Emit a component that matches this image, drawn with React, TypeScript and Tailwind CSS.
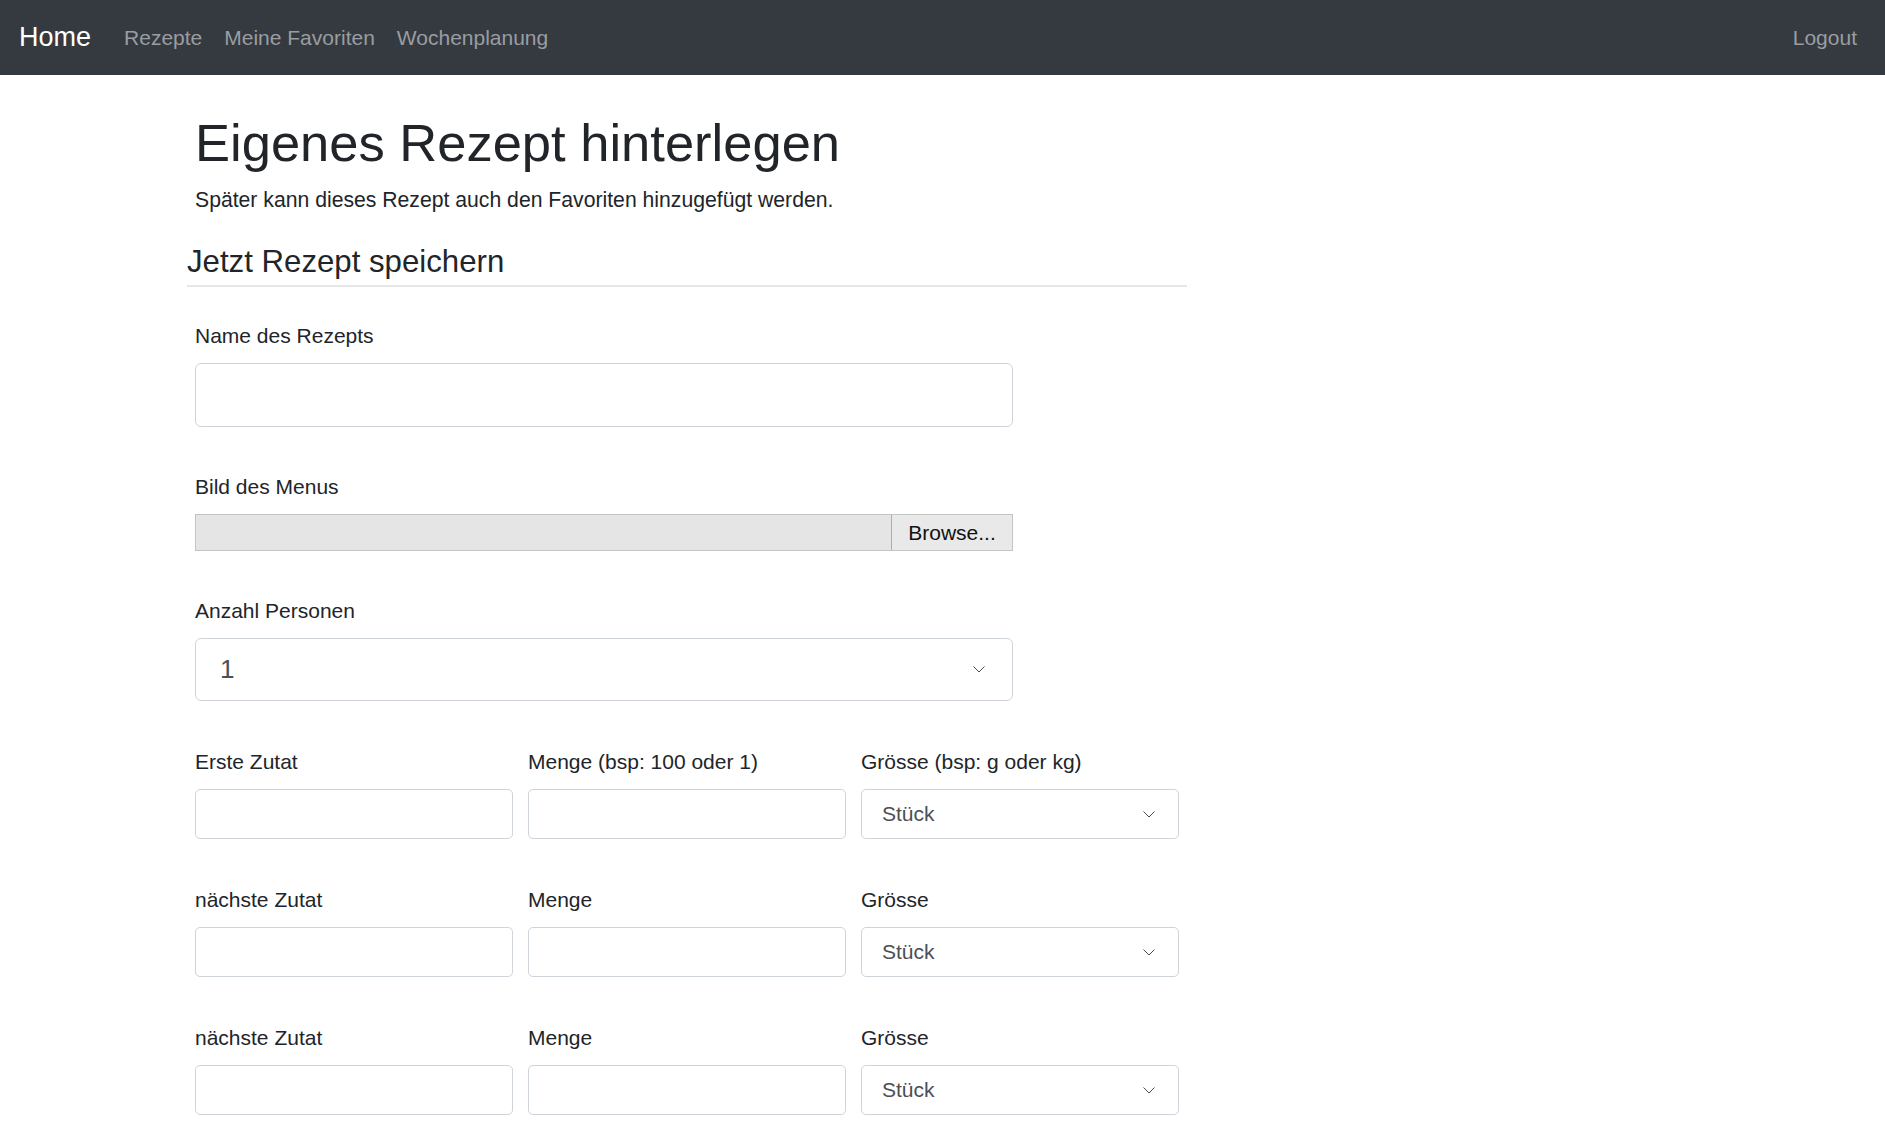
import React from 'react';

const font = { fontFamily: '"Liberation Sans", Arial, sans-serif' };

const Chevron: React.FC = () => (
  <svg width="12" height="7" viewBox="0 0 12 7" fill="none" className="shrink-0">
    <path d="M0.5 0.5 L6 6 L11.5 0.5" stroke="#4a4a4a" strokeWidth="1" />
  </svg>
);

const Label: React.FC<{ children: React.ReactNode }> = ({ children }) => (
  <label className="block h-[32px] leading-[32px] text-[21px] text-[#212529] mb-[11px]">{children}</label>
);

const TextInput: React.FC<{ tall?: boolean }> = ({ tall }) => (
  <input
    type="text"
    className={
      tall
        ? 'block w-full h-[64px] rounded-[6px] border border-[#ced4da] bg-white px-4 outline-none'
        : 'block w-full h-[50px] rounded-[5px] border border-[#ced4da] bg-white px-4 outline-none'
    }
  />
);

const FakeSelect: React.FC<{ value: string; tall?: boolean }> = ({ value, tall }) => (
  <div
    className={
      tall
        ? 'flex items-center justify-between w-full h-[63px] rounded-[6px] border border-[#ced4da] bg-white pl-[24px] pr-[27px] text-[26px] text-[#495057]'
        : 'flex items-center justify-between w-full h-[50px] rounded-[5px] border border-[#ced4da] bg-white pl-[20px] pr-[23px] text-[21px] text-[#495057]'
    }
  >
    <span>{value}</span>
    <Chevron />
  </div>
);

const IngredientRow: React.FC<{ first?: boolean }> = ({ first }) => (
  <div className="grid grid-cols-[318px_318px_318px] gap-[15px] mt-[45px]">
    <div>
      <Label>{first ? 'Erste Zutat' : 'nächste Zutat'}</Label>
      <TextInput />
    </div>
    <div>
      <Label>{first ? 'Menge (bsp: 100 oder 1)' : 'Menge'}</Label>
      <TextInput />
    </div>
    <div>
      <Label>{first ? 'Grösse (bsp: g oder kg)' : 'Grösse'}</Label>
      <FakeSelect value="Stück" />
    </div>
  </div>
);

const App: React.FC = () => {
  const links = ['Rezepte', 'Meine Favoriten', 'Wochenplanung'];

  return (
    <div className="min-h-screen bg-white" style={font}>
      <nav className="h-[75px] bg-[#343a40] flex items-center justify-between pl-[19px] pr-[28px]">
        <div className="flex items-center">
          <span className="text-[27px] text-white mr-[22px]">Home</span>
          {links.map(l => (
            <span key={l} className="text-[21px] text-[#9a9da1] px-[11px]">{l}</span>
          ))}
        </div>
        <span className="text-[21px] text-[#9a9da1]">Logout</span>
      </nav>

      <main className="ml-[187px] w-[1000px] pb-10">
        <div className="pl-[8px]">
          <h1 className="mt-[36px] text-[52.5px] leading-[64px] text-[#212529]">Eigenes Rezept hinterlegen</h1>
          <p className="mt-[9px] text-[21.2px] leading-[32px] text-[#212529]">
            Später kann dieses Rezept auch den Favoriten hinzugefügt werden.
          </p>
        </div>

        <h4 className="mt-[27px] text-[31.2px] leading-[38px] pb-[4px] border-b-2 border-[#e4e6ea] text-[#212529]">
          Jetzt Rezept speichern
        </h4>

        <div className="pl-[8px] w-[992px]">
          <div className="mt-[33px] w-[818px]">
            <Label>Name des Rezepts</Label>
            <TextInput tall />
          </div>

          <div className="mt-[44px] w-[818px]">
            <Label>Bild des Menus</Label>
            <div className="flex h-[37px] border border-[#c4c4c4] bg-[#e5e5e5]">
              <div className="flex-1" />
              <div className="w-[121px] border-l border-[#adadad] bg-[#e9e9e9] flex items-center justify-center text-[21px] text-[#111]">
                Browse...
              </div>
            </div>
          </div>

          <div className="mt-[44px] w-[818px]">
            <Label>Anzahl Personen</Label>
            <FakeSelect value="1" tall />
          </div>

          <div className="mt-[3px]">
            <IngredientRow first />
            <IngredientRow />
            <IngredientRow />
          </div>
        </div>
      </main>
    </div>
  );
};

export default App;
